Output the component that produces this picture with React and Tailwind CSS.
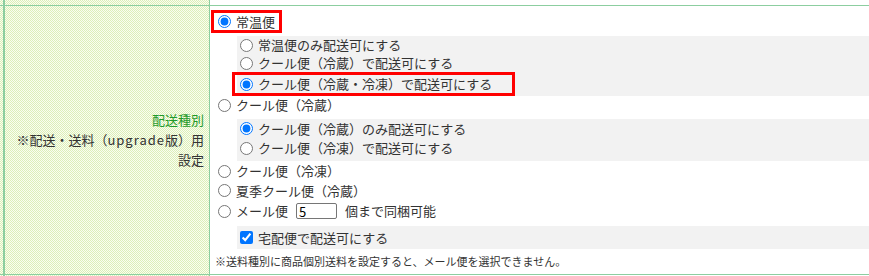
import React from "react";

const hatch =
  "bg-[image:repeating-conic-gradient(#dcefb8_0%_25%,#fafdf0_0%_50%)] bg-[length:2px_2px]";

function Radio({ checked, name }) {
  return (
    <input
      type="radio"
      name={name}
      defaultChecked={checked}
      className="m-0 w-[13px] h-[13px] shrink-0"
    />
  );
}

export default function App() {
  return (
    <div
      className="w-[869px] h-[276px] bg-white text-[13px] text-[#333] flex flex-col overflow-hidden"
      style={{ fontFamily: '"Noto Sans CJK JP", "Noto Sans", sans-serif' }}
    >
      {/* previous row tail */}
      <div className="flex h-[5px] shrink-0">
        <div className={`w-[3px] ${hatch}`} />
        <div className={`w-[207px] border-l-2 border-r border-[#8ccea0] ${hatch}`} />
        <div className="flex-1" />
      </div>
      <div className="h-px bg-[#8ccea0] shrink-0" />

      {/* main row */}
      <div className="flex h-[268px] shrink-0">
        <div className={`w-[3px] ${hatch}`} />
        <div
          className={`w-[207px] shrink-0 border-l-2 border-r border-[#8ccea0] ${hatch} flex flex-col justify-center items-end pr-[5px] text-right leading-[20px]`}
        >
          <div className="text-[#1f9a2a]">配送種別</div>
          <div className="whitespace-nowrap">
            ※配送・送料（<span className="tracking-[1px]">upgrade</span>版）用
          </div>
          <div>設定</div>
        </div>

        <div className="flex-1 flex flex-col pt-[4px]">
          {/* 常温便 */}
          <div className="flex">
            <label className="ml-[1px] h-[23px] flex items-center border-[3px] border-[#ff0000] pl-[4px] pr-[4px] gap-[5px]">
              <Radio name="type" checked />
              <span>常温便</span>
            </label>
          </div>

          <div className="mt-[3px] ml-[27px] bg-[#f2f2f2] flex flex-col">
            <label className="h-[18px] flex items-center pl-[3px] gap-[5px]">
              <Radio name="sub1" />
              <span>常温便のみ配送可にする</span>
            </label>
            <label className="h-[18px] flex items-center pl-[3px] gap-[5px]">
              <Radio name="sub1" />
              <span>クール便（冷蔵）で配送可にする</span>
            </label>
            <div className="flex">
              <label className="-ml-[5px] w-[283px] h-[24px] flex items-center border-[3px] border-[#ff0000] pl-[5px] gap-[5px]">
                <Radio name="sub1" checked />
                <span className="whitespace-nowrap">クール便（冷蔵・冷凍）で配送可にする</span>
              </label>
            </div>
          </div>

          <label className="h-[18px] flex items-center pl-[8px] gap-[5px]">
            <Radio name="type" />
            <span>クール便（冷蔵）</span>
          </label>

          <div className="mt-[5px] ml-[27px] bg-[#f2f2f2] flex flex-col pb-[3px]">
            <label className="h-[19px] flex items-center pl-[3px] gap-[5px]">
              <Radio name="sub2" checked />
              <span>クール便（冷蔵）のみ配送可にする</span>
            </label>
            <label className="h-[20px] flex items-center pl-[3px] gap-[5px]">
              <Radio name="sub2" />
              <span>クール便（冷凍）で配送可にする</span>
            </label>
          </div>

          <label className="h-[20px] flex items-center pl-[8px] gap-[5px]">
            <Radio name="type" />
            <span>クール便（冷凍）</span>
          </label>
          <label className="h-[19px] flex items-center pl-[8px] gap-[5px]">
            <Radio name="type" />
            <span>夏季クール便（冷蔵）</span>
          </label>
          <div className="h-[22px] flex items-center pl-[8px] gap-[5px]">
            <Radio name="type" />
            <span>メール便</span>
            <input
              type="text"
              defaultValue="5"
              className="ml-[3px] w-[41px] h-[16px] border border-[#767676] rounded-[2px] px-[2px] text-[13px] text-black bg-white outline-none leading-none"
            />
            <span className="ml-[3px]">個まで同梱可能</span>
          </div>

          <div className="mt-[4px] ml-[27px] h-[23px] bg-[#f2f2f2] flex items-center pl-[3px] gap-[5px]">
            <input type="checkbox" defaultChecked className="m-0 w-[13px] h-[13px]" />
            <span>宅配便で配送可にする</span>
          </div>

          <div className="h-[25px] flex items-center pl-[5px] text-[11px] whitespace-nowrap">
            ※送料種別に商品個別送料を設定すると、メール便を選択できません。
          </div>
        </div>
      </div>

      <div className="h-px bg-[#8ccea0] shrink-0" />
      <div className="flex h-[1px] shrink-0">
        <div className={`w-[3px] ${hatch}`} />
        <div className={`w-[207px] border-l-2 border-r border-[#8ccea0] ${hatch}`} />
        <div className="flex-1" />
      </div>
    </div>
  );
}
